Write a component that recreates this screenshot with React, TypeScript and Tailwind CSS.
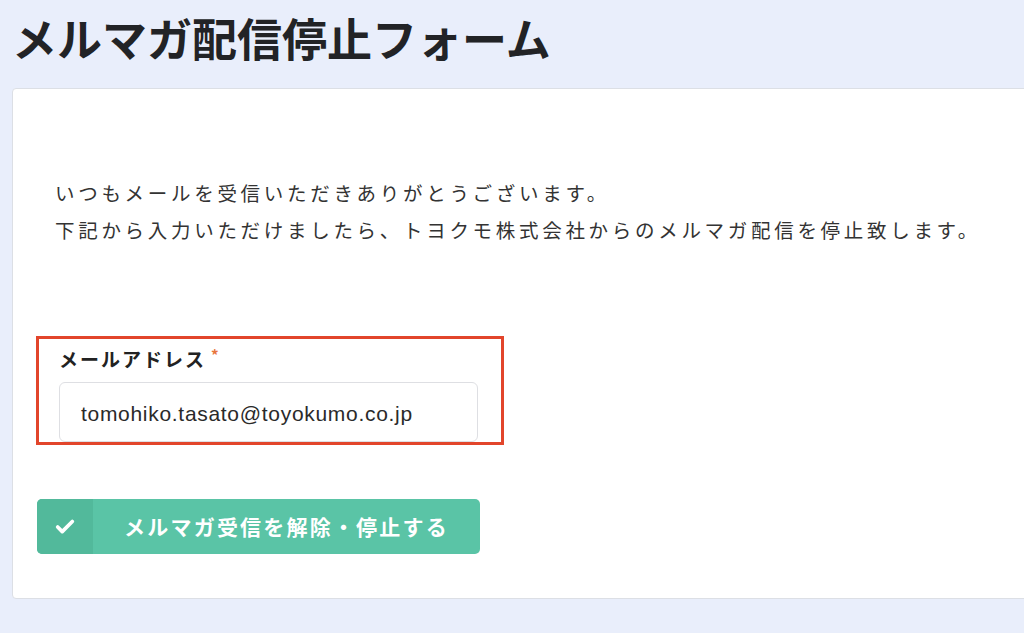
import { Check } from 'lucide-react';

const jp = { fontFamily: '"Noto Sans CJK JP", "Noto Sans", sans-serif' };

export default function App() {
  return (
    <div className="h-[633px] w-[1024px] overflow-hidden bg-[#e9eefb]" style={jp}>
      <h1 className="pl-[12px] pt-[15px] text-[45px] font-bold leading-[45px] text-[#222326]">
        メルマガ配信停止フォーム
      </h1>

      <div className="ml-[12px] mt-[28px] w-[1030px] rounded-[4px] border border-[#dcdfe5] bg-white pl-[23px] pt-[85px] pb-[44px]">
        <p className="ml-[19px] text-[19.5px] leading-[37px] tracking-[3.7px] text-[#333]">
          いつもメールを受信いただきありがとうございます。
          <br />
          下記から入力いただけましたら、トヨクモ株式会社からのメルマガ配信を停止致します。
        </p>

        <div className="mt-[88px] w-[468px] border-[3px] border-[#e2452b] pl-[20px] pr-[23px] pt-[8px]">
          <label className="flex items-start text-[19px] font-bold leading-[24px] tracking-[2px] text-[#222]">
            メールアドレス
            <span className="ml-[5px] text-[15px] leading-[15px] text-[#e8763c]">*</span>
          </label>
          <div className="mt-[11px] flex h-[60px] items-center rounded-[6px] border border-[#dedfe3] bg-white pl-[21px] pt-[3px]">
            <span className="text-[21px] tracking-[0.7px] text-[#2a2a2a]" style={{ fontFamily: '"Liberation Sans", Arial, sans-serif' }}>
              tomohiko.tasato@toyokumo.co.jp
            </span>
          </div>
        </div>

        <button
          type="button"
          className="ml-[1px] mt-[54px] flex h-[55px] w-[443px] overflow-hidden rounded-[5px] bg-[#5ac4a6] text-white"
        >
          <span className="flex h-full w-[56px] items-center justify-center bg-[#52b99b]">
            <Check size={22} strokeWidth={4} />
          </span>
          <span className="flex flex-1 items-center justify-center text-[21px] font-bold tracking-[2.2px]">
            メルマガ受信を解除・停止する
          </span>
        </button>
      </div>
    </div>
  );
}
